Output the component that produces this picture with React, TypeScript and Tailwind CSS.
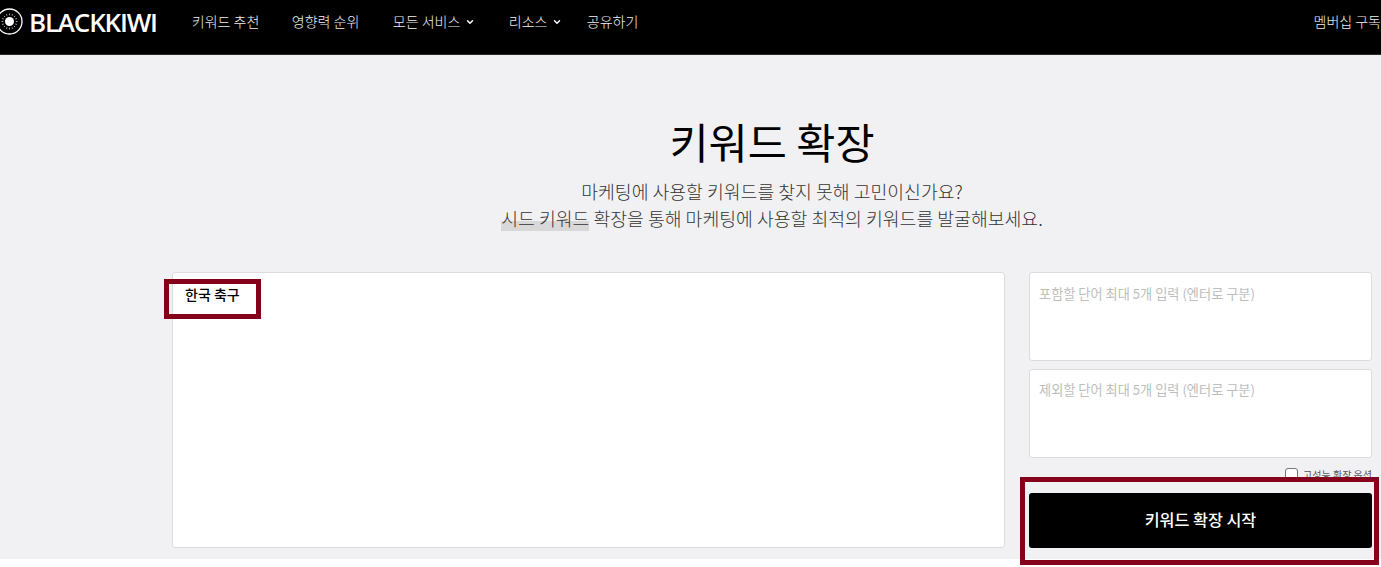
import { ChevronDown } from "lucide-react";

const font = { sans: "font-['Noto_Sans_CJK_KR','Noto_Sans',sans-serif]" };

function Logo() {
  const rays = Array.from({ length: 16 }, (_, i) => (i * 360) / 16);
  return (
    <div className="flex items-center">
      <svg width="27" height="27" viewBox="0 0 27 27" className="-ml-[4px] shrink-0">
        <circle cx="13.5" cy="13.5" r="12.5" fill="none" stroke="#fff" strokeWidth="1.3" />
        <circle cx="13.5" cy="13.5" r="4.5" fill="#fff" />
        {rays.map((r) => (
          <line key={r} x1="13.5" y1="5.6" x2="13.5" y2="7.2" stroke="#bbb" strokeWidth="0.9" transform={`rotate(${r} 13.5 13.5)`} />
        ))}
      </svg>
      <span className="ml-[6px] font-['Open_Sans',sans-serif] text-[26px] leading-none font-semibold tracking-[-1.2px] text-white">BLACKKIWI</span>
    </div>
  );
}

function NavItem({ label, caret, className }: { label: string; caret?: boolean; className: string }) {
  return (
    <a className={`flex items-center text-[14px] font-light whitespace-nowrap text-[#f0f0f0] ${className}`}>
      {label}
      {caret && <ChevronDown size={10} strokeWidth={3.5} className="ml-[5px] text-white" />}
    </a>
  );
}

export default function App() {
  return (
    <div className={`relative h-[567px] overflow-hidden bg-white ${font.sans}`}>
      <header className="flex h-[55px] items-start justify-between border-b border-[#2a2a2a] bg-black pt-[8px]">
        <div className="flex h-[27px] items-center">
          <Logo />
          <nav className="ml-[35px] flex items-center">
            <NavItem label="키워드 추천" className="w-[100px]" />
            <NavItem label="영향력 순위" className="w-[101px]" />
            <NavItem label="모든 서비스" caret className="w-[116px]" />
            <NavItem label="리소스" caret className="w-[78px]" />
            <NavItem label="공유하기" className="w-[60px]" />
          </nav>
        </div>
        <a className="flex h-[27px] items-center text-[14px] font-light whitespace-nowrap text-[#f0f0f0]">멤버십 구독</a>
      </header>

      <main className="h-[504px] bg-[#f1f1f4] pt-[59px] pl-[172px]">
        <div className="w-[1200px]">
          <h1 className="text-center text-[42.5px] leading-[54px] font-normal text-black">키워드 확장</h1>
          <div className="mt-[10px] text-center text-[18.3px] leading-[27px] font-light text-[#333]">
            <p>마케팅에 사용할 키워드를 찾지 못해 고민이신가요?</p>
            <p>
              <span className="bg-[linear-gradient(transparent_62%,#d8d8d8_62%)]">시드 키워드</span> 확장을 통해 마케팅에 사용할 최적의 키워드를 발굴해보세요.
            </p>
          </div>

          <div className="mt-[40px] flex gap-[24px]">
            <textarea
              readOnly
              defaultValue="한국 축구"
              className="h-[276px] w-[833px] resize-none rounded-[3px] border border-[#dcdcdc] bg-white px-[12px] py-[12px] text-[14px] leading-[18px] font-medium text-black outline-none"
            />
            <div className="w-[343px]">
              <textarea
                readOnly
                placeholder="포함할 단어 최대 5개 입력 (엔터로 구분)"
                className="block h-[89px] w-full resize-none rounded-[3px] border border-[#dcdcdc] bg-white px-[9px] py-[12px] text-[13.2px] leading-[18px] outline-none placeholder:text-[#bdbdbd]"
              />
              <textarea
                readOnly
                placeholder="제외할 단어 최대 5개 입력 (엔터로 구분)"
                className="mt-[8px] block h-[89px] w-full resize-none rounded-[3px] border border-[#dcdcdc] bg-white px-[9px] py-[11px] text-[13.2px] leading-[18px] outline-none placeholder:text-[#bdbdbd]"
              />
              <label className="mt-[10px] flex h-[13px] items-center justify-end">
                <span className="h-[13px] w-[13px] rounded-[3px] border border-[#767676] bg-white" />
                <span className="ml-[5px] text-[10px] leading-none whitespace-nowrap text-[#555]">고성능 확장 옵션</span>
              </label>
              <button className="mt-[12px] h-[55px] w-full rounded-[3px] bg-black pb-[3px] text-[16.2px] font-medium text-white">키워드 확장 시작</button>
            </div>
          </div>
        </div>
      </main>

      <div className="absolute top-[279px] left-[164px] h-[40px] w-[97px] border-[5px] border-[#85001b]" />
      <div className="absolute top-[477px] left-[1020px] h-[88px] w-[359px] border-[5px] border-[#85001b]" />
    </div>
  );
}
